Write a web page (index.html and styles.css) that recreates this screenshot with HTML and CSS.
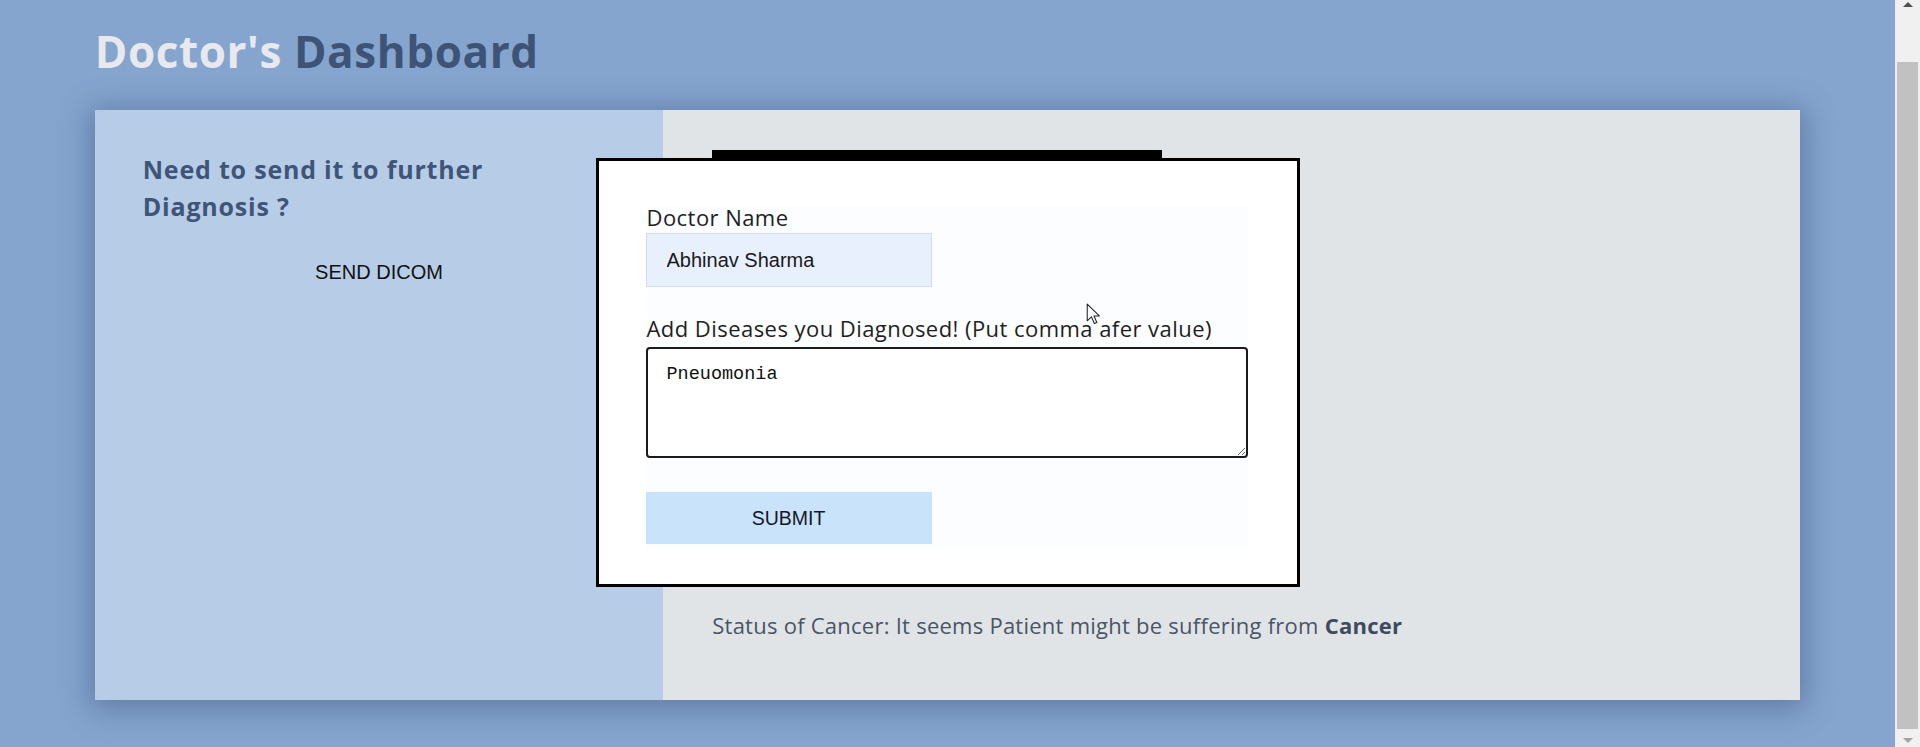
FILE: index.html
```html
<!DOCTYPE html>
<html lang="en">
<head>
<meta charset="utf-8">
<title>Doctor's Dashboard</title>
<link rel="stylesheet" href="styles.css">
</head>
<body>
<div class="page">
  <main class="main">
    <h1 class="title"><span class="title-light">Doctor's</span> Dashboard</h1>
    <section class="card">
      <div class="side">
        <h3 class="side-heading">Need to send it to further Diagnosis ?</h3>
        <button class="send-btn" type="button">SEND DICOM</button>
      </div>
      <div class="content">
        <div class="preview"></div>
        <p class="status">Status of Cancer: It seems Patient might be suffering from <b>Cancer</b></p>
      </div>
    </section>
  </main>
  <aside class="scrollbar">
    <div class="sb-btn"><span class="sb-up"></span></div>
    <div class="sb-track"></div>
    <div class="sb-thumb"></div>
    <div class="sb-btn"><span class="sb-down"></span></div>
  </aside>
</div>

<div class="overlay">
  <div class="modal">
    <form class="form">
      <label class="form-label" for="doc">Doctor Name</label>
      <input class="form-input" id="doc" type="text" value="Abhinav Sharma">
      <label class="form-label form-label-gap" for="dis">Add Diseases you Diagnosed! (Put comma afer value)</label>
      <textarea class="form-textarea" id="dis" spellcheck="true">Pneuomonia</textarea>
      <button class="form-submit" type="button">SUBMIT</button>
    </form>
  </div>
</div>

<svg class="cursor" width="15" height="23" viewBox="0 0 14 22" aria-hidden="true">
  <path d="M1 1 L1 17 L5 13.2 L7.8 19.6 L10.2 18.6 L7.5 12.4 L12.6 12.4 Z" fill="#ffffff" stroke="#222" stroke-width="1" stroke-linejoin="round"/>
</svg>
</body>
</html>
```

FILE: styles.css
```css
* {
  box-sizing: border-box;
}

html, body {
  margin: 0;
  padding: 0;
  height: 747px;
  overflow: hidden;
}

body {
  background: #85a5cf;
  font-family: "Open Sans", "Noto Sans", sans-serif;
}

.page {
  display: flex;
  height: 747px;
}

.main {
  flex: 1;
  padding-top: 30px;
}

.title {
  width: 90%;
  margin: 0 auto;
  padding-left: 0;
  font-size: 44px;
  line-height: 42px;
  letter-spacing: 0.6px;
  font-weight: 700;
  color: #3d5477;
}

.title-light {
  color: #e7e9ed;
}

.card {
  width: 90%;
  height: 590px;
  margin: 38px auto 0;
  display: flex;
  box-shadow: 0 4px 28px 6px rgba(55, 78, 120, 0.45);
}

.side {
  width: 33.333%;
  background: #b7cce6;
  padding: 41px 48px 0;
}

.side-heading {
  margin: 0;
  max-width: 430px;
  font-size: 25px;
  line-height: 37px;
  letter-spacing: 0.8px;
  font-weight: 700;
  color: #3f5577;
}

.send-btn {
  display: block;
  margin: 36px auto 0;
  padding: 0;
  background: none;
  border: 0;
  font-family: "Liberation Sans", Arial, sans-serif;
  font-size: 20px;
  line-height: 23px;
  color: #111;
}

.content {
  flex: 1;
  background: #e0e4e7;
  padding: 40px 49px 0;
}

.preview {
  width: 450px;
  height: 420px;
  background: #000;
}

.status {
  margin: 40px 0 0;
  font-size: 22px;
  line-height: 30px;
  letter-spacing: 0.25px;
  color: #4b5565;
}

.status b {
  color: #3e4b5e;
  font-weight: 700;
}

/* fake browser scrollbar */
.scrollbar {
  width: 25px;
  flex: none;
  background: #f0f0f0;
  display: flex;
  flex-direction: column;
}

.sb-btn {
  height: 17px;
  flex: none;
  display: flex;
  align-items: center;
  justify-content: center;
}

.sb-btn:last-child {
  height: 18px;
}

.sb-up {
  width: 0;
  height: 0;
  border-left: 5px solid transparent;
  border-right: 5px solid transparent;
  border-bottom: 5px solid #505050;
  margin-top: -8px;
}

.sb-down {
  width: 0;
  height: 0;
  border-left: 5px solid transparent;
  border-right: 5px solid transparent;
  border-top: 5px solid #a3a3a3;
  margin-top: 4px;
}

.sb-track {
  height: 45px;
  flex: none;
}

.sb-thumb {
  flex: 1;
  margin: 0 2px;
  background: #c1c1c1;
}

/* modal overlay */
.overlay {
  position: fixed;
  top: 0;
  left: 0;
  right: 25px;
  bottom: 2px;
  display: flex;
  align-items: center;
  justify-content: center;
}

.modal {
  width: 704px;
  background: #fff;
  border: 3px solid #000;
  padding: 45px 49px 36px 47px;
}

.form {
  background: #fbfdff;
  display: flex;
  flex-direction: column;
  align-items: flex-start;
  padding-bottom: 4px;
}

.form-label {
  font-size: 22px;
  line-height: 22px;
  letter-spacing: 0.45px;
  color: #1f1f1f;
  padding-left: 1px;
}

.form-label-gap {
  margin-top: 30px;
}

.form-input {
  margin: 5px 0 0;
  width: 286px;
  height: 54px;
  border: 1px solid #d3dcec;
  background: #e8f0fe;
  padding: 0 20px;
  font-family: "Liberation Sans", Arial, sans-serif;
  font-size: 20px;
  color: #1a1a1a;
  outline: none;
}

.form-textarea {
  margin: 8px 0 0;
  width: 602px;
  height: 111px;
  border: 2px solid #1b1b1b;
  border-radius: 4px;
  padding: 15px 19px;
  background: #fff;
  font-family: "Liberation Mono", "DejaVu Sans Mono", monospace;
  font-size: 18.5px;
  color: #111;
  outline: none;
}

.form-submit {
  margin-top: 34px;
  width: 286px;
  height: 52px;
  border: 0;
  background: #c9e3fb;
  font-family: "Liberation Sans", Arial, sans-serif;
  font-size: 19.5px;
  color: #15182a;
  padding: 0;
}

.cursor {
  position: fixed;
  left: 1086px;
  top: 303px;
}
```
